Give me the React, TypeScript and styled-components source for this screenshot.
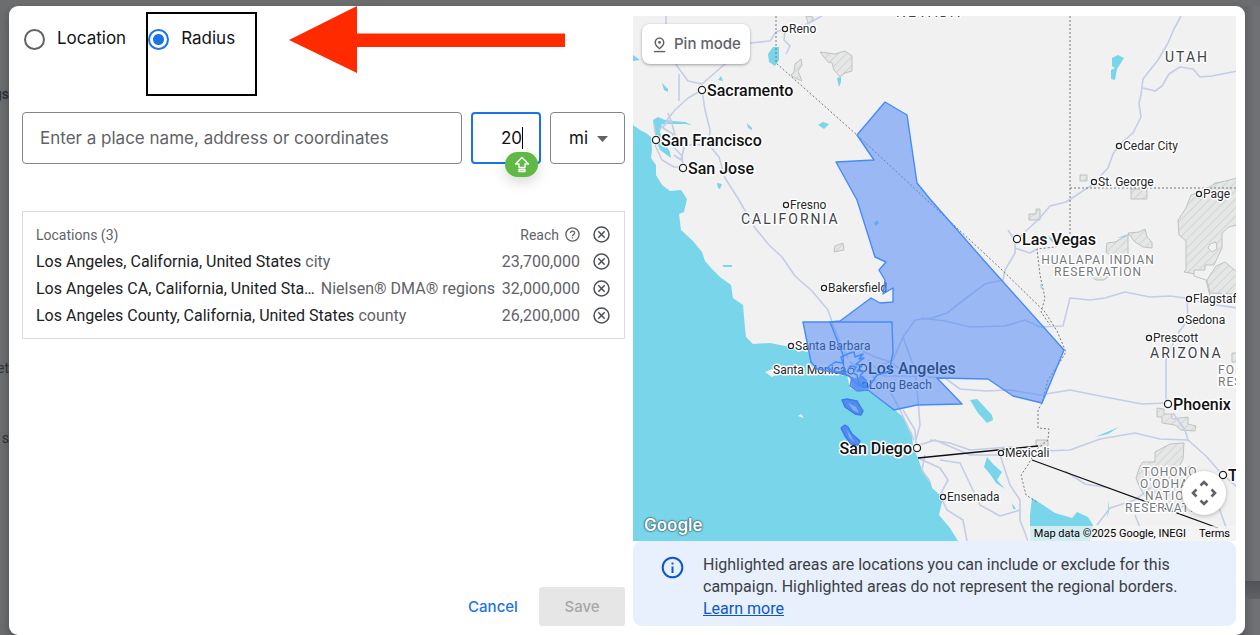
import React, { useState } from 'react';
import styled, { createGlobalStyle, css } from 'styled-components';

const UI_FONT = `'Google Sans', Inter, 'Liberation Sans', sans-serif`;
const TEXT_FONT = `Roboto, 'Liberation Sans', sans-serif`;

const GlobalStyle = createGlobalStyle`
  *, *::before, *::after { box-sizing: border-box; }
  body { margin: 0; background: #6c6d6f; font-family: ${TEXT_FONT}; color: #202124; }
  button, input, select { font: inherit; color: inherit; margin: 0; }
`;

const Page = styled.div`
  display: grid;
  grid-template-columns: 9px minmax(0, 1fr) 15px;
  min-height: 100vh;
  padding-top: 6px;
`;

const Behind = styled.aside`
  display: flex;
  flex-direction: column;
  align-items: flex-end;
  overflow: hidden;
  padding-top: 78px;
  color: #2f333b;
  font-size: 14px;
  line-height: 20px;
`;

const BehindWord = styled.span<{ $gap?: number; $bold?: boolean }>`
  margin-top: ${p => p.$gap ?? 0}px;
  font-weight: ${p => (p.$bold ? 700 : 400)};
`;

const BehindEdge = styled.aside`
  display: flex;
  flex-direction: column;
  justify-content: flex-end;
  background: linear-gradient(90deg, #626366, #707174 10px);
`;

const BehindBand = styled.div`
  height: 18px;
  margin-bottom: 36px;
  background: linear-gradient(#505257, #5f6165);
`;

const Dialog = styled.main`
  display: grid;
  grid-template-columns: minmax(0, 1fr) minmax(0, 1fr);
  gap: 8px;
  padding: 10px 9px 9px 13px;
  background: #fff;
  border-radius: 9px;
  box-shadow: 0 4px 10px rgba(0, 0, 0, 0.3);
`;

const Column = styled.section`
  display: flex;
  flex-direction: column;
  min-width: 0;
`;

/* mode picker */
const ModeRow = styled.div`
  position: relative;
  display: flex;
  gap: 22px;
  height: 46px;
  padding-left: 2px;
`;

const ModeLabel = styled.label`
  position: relative;
  display: flex;
  align-items: center;
  gap: 12px;
  font: 400 17px/24px ${UI_FONT};
  color: #111214;
`;

const Radio = styled.input`
  appearance: none;
  width: 21px;
  height: 21px;
  border: 2px solid #5f6368;
  border-radius: 50%;
  background: #fff;
  &:checked {
    border-color: #1a73e8;
    background: radial-gradient(circle, #1a73e8 5px, #fff 6px);
  }
`;

const ModeText = styled.span`
  padding-bottom: 2px;
`;

const Highlight = styled.span`
  position: absolute;
  left: -2px;
  top: -4px;
  width: 111px;
  height: 84px;
  border: 2px solid #000;
  pointer-events: none;
`;

const Arrow = styled.svg`
  position: absolute;
  left: 267px;
  top: -10px;
  width: 276px;
  height: 68px;
`;

/* search row */
const SearchRow = styled.div`
  display: flex;
  gap: 9px;
  margin-top: 50px;
  font: 400 17px/24px ${UI_FONT};
`;

const fieldBox = css`
  height: 52px;
  border: 1px solid #80868b;
  border-radius: 4px;
  background: #fff;
  outline: none;
`;

const PlaceInput = styled.input`
  ${fieldBox}
  flex: 1;
  min-width: 0;
  padding: 0 17px;
  &::placeholder { color: #5f6368; opacity: 1; }
`;

const DistanceField = styled.div`
  position: relative;
  width: 70px;
`;

const DistanceInput = styled.input`
  ${fieldBox}
  width: 100%;
  border: 2px solid #1a73e8;
  padding: 0 17px;
  text-align: right;
  color: #111214;
`;

const Caret = styled.span`
  position: absolute;
  right: 18px;
  top: 15px;
  width: 1px;
  height: 22px;
  background: #000;
`;

const ExtensionBadge = styled.button`
  position: absolute;
  left: 34px;
  top: 40px;
  display: grid;
  place-items: center;
  width: 33px;
  height: 25px;
  padding: 0;
  border: 0;
  border-radius: 13px;
  background: #5fb944;
  color: #fff;
  box-shadow: 0 5px 14px rgba(0, 0, 0, 0.16);
`;

const UnitField = styled.div`
  position: relative;
  width: 75px;
`;

const UnitSelect = styled.select`
  ${fieldBox}
  appearance: none;
  width: 100%;
  padding: 0 18px;
  color: #111214;
`;

const UnitArrow = styled.svg`
  position: absolute;
  right: 17px;
  top: 24px;
  width: 11px;
  height: 6px;
  fill: #5f6368;
  pointer-events: none;
`;

/* locations table */
const ListCard = styled.div`
  margin-top: 47px;
  padding: 9px 14px 9px 13px;
  border: 1px solid #dadce0;
`;

const Table = styled.table`
  width: 100%;
  border-collapse: collapse;
  font-size: 16px;
  line-height: 20px;
`;

const Row = styled.tr`
  height: 27px;
`;

const HeadCell = styled.th<{ $end?: boolean }>`
  padding: 0;
  font-weight: 400;
  font-size: 14px;
  color: #5f6368;
  text-align: ${p => (p.$end ? 'right' : 'left')};
`;

const HeadLabel = styled.span`
  display: inline-flex;
  align-items: center;
  gap: 6px;
`;

const NameCell = styled.td`
  padding: 0;
  white-space: nowrap;
`;

const Kind = styled.span<{ $apart?: boolean }>`
  margin-left: ${p => (p.$apart ? 6 : 4)}px;
  color: #5f6368;
`;

const ReachCell = styled.td`
  padding: 0;
  text-align: right;
  color: #5f6368;
`;

const ActionCell = styled.td`
  width: 30px;
  padding: 0;
`;

const IconButton = styled.button`
  display: block;
  margin-left: auto;
  padding: 0;
  border: 0;
  background: none;
  color: #4c5056;
  line-height: 0;
`;

/* footer */
const Footer = styled.footer`
  display: flex;
  justify-content: flex-end;
  gap: 3px;
  margin-top: auto;
`;

const FooterButton = styled.button`
  height: 39px;
  min-width: 86px;
  padding: 0 16px;
  border: 0;
  border-radius: 3px;
  background: transparent;
  color: #1a73e8;
  font: 500 15px/20px ${UI_FONT};
  &:disabled { background: #e6e6e6; color: #a5a7a9; }
`;

/* map */
const MapPane = styled.div`
  position: relative;
  display: flex;
  flex: 1 1 400px;
  min-height: 0;
  overflow: hidden;
`;

const MapCanvas = styled.svg`
  flex: 1;
  min-width: 0;
  height: auto;
  background: #f1f1f1;
`;

const PinMode = styled.button`
  position: absolute;
  left: 9px;
  top: 8px;
  display: flex;
  align-items: center;
  gap: 6px;
  height: 40px;
  padding: 0 9px;
  border: 0;
  border-radius: 8px;
  background: #fff;
  color: #5f6368;
  font: 500 15px/20px ${UI_FONT};
  white-space: nowrap;
  box-shadow: 0 1px 3px rgba(0, 0, 0, 0.35);
`;

const CameraButton = styled.button`
  position: absolute;
  right: 10px;
  bottom: 26px;
  display: grid;
  place-items: center;
  width: 44px;
  height: 44px;
  padding: 0;
  border: 0;
  border-radius: 50%;
  background: #fff;
  color: #5f6368;
  box-shadow: 0 1px 4px rgba(0, 0, 0, 0.25);
`;

const MapLogo = styled.span`
  position: absolute;
  left: 11px;
  bottom: 4px;
  color: #fff;
  font: 600 17px/24px ${UI_FONT};
  text-shadow: 0 0 1px #2f5f6c, 0 0 1px #2f5f6c, 0 0 2px #45707a, 0 0 2px #45707a;
`;

const MapCredit = styled.div`
  position: absolute;
  right: 0;
  bottom: 0;
  display: flex;
  gap: 13px;
  height: 15px;
  padding: 0 6px;
  background: rgba(245, 245, 245, 0.72);
  font-size: 11px;
  line-height: 15px;
  color: #000;
`;

const CreditLink = styled.a`
  color: inherit;
  text-decoration: none;
`;

const Notice = styled.div`
  display: flex;
  gap: 19px;
  padding: 13px 28px 6px;
  border-radius: 9px;
  background: #e8f0fe;
  color: #3c4043;
  font-size: 16px;
  line-height: 22px;
`;

const NoticeIcon = styled.svg`
  flex: none;
  width: 23px;
  height: 23px;
  margin-top: 2px;
`;

const NoticeText = styled.p`
  margin: 0;
`;

const LearnMore = styled.a`
  color: #0b57d0;
  display: block;
`;

const stateText = css`font-size: 14px; letter-spacing: 2px; fill: #3f4347;`;
const areaText = css`font-size: 12px; letter-spacing: 1px; fill: #74787d;`;
const majorText = css`font-size: 16px; font-weight: 500; fill: #111;`;
const minorText = css`font-size: 12px; fill: #26282b;`;

type LabelKind = 'state' | 'area' | 'major' | 'minor';

const Label = styled.text<{ $kind: LabelKind }>`
  font-family: ${TEXT_FONT};
  stroke: #fff;
  stroke-width: 3px;
  stroke-linejoin: round;
  paint-order: stroke;
  ${p => ({ state: stateText, area: areaText, major: majorText, minor: minorText })[p.$kind]}
`;

interface City {
  x: number;
  y: number;
  name: string;
  kind?: 'major' | 'minor';
  before?: boolean;
}

const Place = ({ x, y, name, kind = 'minor', before }: City) => {
  const r = kind === 'major' ? 4 : 3;
  return (
    <g>
      <circle cx={x} cy={y} r={r + 1} fill="#fff" />
      <circle cx={x} cy={y} r={r - 0.4} fill="#fff" stroke="#222" strokeWidth="1.3" />
      <Label $kind={kind} x={before ? x - 5 : x + r + 1} y={kind === 'major' ? y + 6 : y + 4} textAnchor={before ? 'end' : 'start'}>
        {name}
      </Label>
    </g>
  );
};

const CITIES: City[] = [
  { x: 785, y: 29, name: 'Reno' },
  { x: 702, y: 90, name: 'Sacramento', kind: 'major' },
  { x: 656, y: 140, name: 'San Francisco', kind: 'major' },
  { x: 683, y: 168, name: 'San Jose', kind: 'major' },
  { x: 786, y: 205, name: 'Fresno' },
  { x: 824, y: 288, name: 'Bakersfield' },
  { x: 791, y: 346, name: 'Santa Barbara' },
  { x: 863, y: 368, name: 'Los Angeles', kind: 'major' },
  { x: 865, y: 385, name: 'Long Beach' },
  { x: 917, y: 448, name: 'San Diego', kind: 'major', before: true },
  { x: 1001, y: 453, name: 'Mexicali' },
  { x: 943, y: 497, name: 'Ensenada' },
  { x: 1017, y: 239, name: 'Las Vegas', kind: 'major' },
  { x: 1119, y: 146, name: 'Cedar City' },
  { x: 1094, y: 182, name: 'St. George' },
  { x: 1199, y: 194, name: 'Page' },
  { x: 1189, y: 299, name: 'Flagstaff' },
  { x: 1181, y: 320, name: 'Sedona' },
  { x: 1149, y: 338, name: 'Prescott' },
  { x: 1168, y: 404, name: 'Phoenix', kind: 'major' },
  { x: 1223, y: 475, name: 'Tucson', kind: 'major' },
];

const REGION =
  'M885 102L907 115L917 183L930 199L988 265L1064 350L1042 403L1013 396L988 379L937 378L962 404L917 405L894 410L868 390L857 391L850 386L852 378L844 373L843 355L830 322L840 321L871 298L880 303L893 302L893 288L883 294L885 280L879 270L886 262L875 257L857 200L836 162L874 160L857 135Z';
const COUNTY = 'M803 322L892 322L893 353L889 372L877 375L868 388L858 385L849 376L838 373L817 369L811 362Z';
const CITY =
  'M843 363L841 357L850 353L854 352L855 357L863 354L859 359L864 358L856 364L862 366L857 371L864 371L860 376L866 380L866 386L859 384L857 375L853 373L856 367L850 366L847 372L836 372L827 368L835 362Z';
const ISLAND_A = 'M842 400L847 399L857 401L863 411L861 415L855 414L845 407Z';
const ISLAND_B = 'M841 428L845 425L848 427L852 434L860 441L858 445L851 444L845 436Z';

const MapDrawing = () => (
  <MapCanvas viewBox="633 16 604 525" preserveAspectRatio="xMinYMid slice" role="img" aria-label="Map of California and surrounding states">
    <defs>
      <pattern id="hatch" width="6" height="6" patternUnits="userSpaceOnUse" patternTransform="rotate(45)">
        <rect width="6" height="6" fill="#e5e6e6" />
        <path d="M0 0V6" stroke="#d3d5d5" strokeWidth="2" />
      </pattern>
    </defs>
    <rect x="633" y="16" width="604" height="525" fill="#f1f1f1" />

    {/* water */}
    <g fill="#79d5e9">
      <path d="M633 125L640 130L646 133L651 137L652 150L651 158L656 165L656 175L662 185L670 191L681 190L687 199L684 212L679 214L681 230L693 241L702 252L705 261L712 269L720 277L731 285L733 298L743 305L745 328L746 337L753 344L770 343L790 347L807 348L812 365L827 371L847 375L850 388L857 391L867 390L893 408L903 417L912 433L913 447L918 458L922 470L930 480L932 488L940 495L942 502L939 515L950 528L958 541H633Z" />
      <path d="M1032 498L1040 503L1055 513L1072 518L1077 512L1088 517L1093 525L1090 541H1030V515Z" />
      <path d="M653 120L658 117L665 120L673 121L685 122L692 125L685 124L670 124L662 124L660 132L664 142L670 152L671 158L660 150L656 140Z" />
      <path d="M773 47L779 47L779 60L775 66L769 62L768 54Z" />
      <path d="M1112 58L1118 55L1124 58L1117 69L1115 80L1111 79L1111 70L1115 68L1112 66Z" />
      <path d="M662 83L668 89L668 92L664 90ZM718 80L721 76L723 81ZM747 123L752 128L752 130L748 128ZM818 125L823 122L829 124L824 129ZM837 78L841 77L841 82L839 87ZM633 55L640 60L633 61ZM717 183L722 184L720 189L718 188ZM722 265L732 265L732 267L724 267ZM1048 236L1051 241L1059 247L1054 240Z" />
      <path d="M970 400L977 399L992 415L993 420L987 423L978 413Z" />
      <path d="M987 457L993 464L1002 472L997 480L1005 489L996 483L990 474L984 467ZM1012 503L1016 509L1013 509ZM1109 500L1107 518L1109 511ZM1095 437L1119 427L1108 434ZM1213 183L1225 181L1217 184ZM1117 238L1132 233L1126 237ZM1040 283L1042 287L1041 289ZM874 223L877 220L879 223L876 226Z" />
    </g>
    <path d="M765 372L772 369L776 375L772 377ZM798 416L801 414L804 418Z" fill="#f1f1f1" />

    {/* reservations and closed areas */}
    <g fill="url(#hatch)" stroke="#bfc2c2" strokeWidth="1">
      <path d="M820 52L835 54L845 51L852 56L852 71L845 73L840 77L834 70L832 63L828 62Z" />
      <path d="M791 75L794 72L795 64L801 59L802 65L798 71L802 81L795 78ZM806 16L813 17L813 21L808 23ZM835 246L843 243L844 250L834 252Z" />
      <path d="M1080 175H1087V181H1080ZM1131 189H1147V199H1131ZM1029 214H1036V209H1040V220H1029Z" />
      <path d="M1237 178L1214 184L1205 190L1191 195L1186 208L1178 220L1179 235L1186 241L1186 270L1184 272L1207 276L1210 293L1237 292V178Z" />
      <path d="M1237 225L1229 227L1222 233V248L1214 265H1205V270H1194V276L1206 280L1210 296H1237Z" fill="#f1f1f1" />
      <path d="M1210 244L1216 242L1217 249L1212 252L1208 248Z" fill="#f1f1f1" />
      <path d="M1207 280L1210 293L1237 294V272L1225 262L1216 266Z" />
      <path d="M1106 252L1107 243L1115 242L1128 235V257H1112ZM1128 233L1139 232L1145 229L1147 237L1152 242V248L1143 247L1135 242Z" />
      <path d="M1157 408L1164 409V414H1172V419L1188 417V424L1196 426L1195 431L1181 430L1175 425L1162 423V417H1157Z" />
      <path d="M1143 462H1155V452L1170 444L1184 443L1183 459L1178 469L1190 466L1200 480L1190 505L1170 510L1150 505L1140 488L1136 478L1140 466Z" />
      <path d="M1036 440H1048V446H1036ZM1236 353H1232V362H1237M1090 276L1096 280H1104L1109 276" />
    </g>

    {/* roads */}
    <g fill="none" stroke="#c3cde6" strokeWidth="1.6" strokeLinejoin="round">
      <path d="M666 16V45L677 66L688 81L702 84M679 74V101M702 84L725 64L736 49L750 43L770 41L776 32L790 27L805 25L822 16" />
      <path d="M785 30L784 40L790 46L786 54" />
      <path d="M702 90L688 98L675 110L667 120L663 128L673 134L672 145L682 156L683 166M668 113L671 121L664 125L659 130M702 90L705 110L710 130L709 145L719 157L725 178L739 200L755 228L770 246L782 257L795 276L812 291L828 310L833 325L841 345L848 358" />
      <path d="M655 145L662 160L674 167L683 167M671 120L675 135L684 148L681 160L674 155M688 145L709 145M656 138L654 124" />
      <path d="M1181 16L1174 29L1168 43L1158 60L1143 79L1141 95L1139 103L1141 117L1133 133L1120 144L1113 154L1108 168L1092 185L1066 202L1050 206L1038 220L1027 230L1017 239M1143 88L1155 91L1162 86L1169 74L1180 67L1193 69L1200 77L1212 76L1237 71" />
      <path d="M1008 230L1015 241L1015 253L1005 270L1003 280L985 284L965 299L947 313L932 318L915 320L903 337L893 360L880 366M1015 248L1030 253L1037 249" />
      <path d="M921 318L945 321L970 327L1005 326L1025 320L1040 327L1063 326L1066 314L1070 298L1090 300L1105 298L1125 292L1150 297L1170 296L1185 298L1210 304L1237 308M1187 300L1188 320L1178 333" />
      <path d="M864 370L885 376L910 376L945 378L960 389L985 391L1010 390L1040 395L1070 390L1105 397L1142 404L1168 403M1166 403L1166 360L1176 337M1173 413L1185 430L1188 440L1206 456L1220 472L1237 487M1223 475L1218 505L1227 530" />
      <path d="M930 440L950 443L970 450L1010 447L1043 451L1070 450L1100 439L1135 433L1160 439L1188 440M903 410L915 430L916 446L935 440L970 455L1000 455L1010 485L1020 500L1020 520L1028 541" />
      <path d="M903 337L915 370L918 400L920 425L916 440M918 458L940 468L948 480L940 495L947 510L963 520L967 541M925 455L922 470L930 482M940 460L960 463L980 505L1000 516L1020 510" />
      <path d="M870 370L876 382L890 391L900 410L914 440M860 350L875 357L888 361L905 372M868 360L882 375M850 362L864 372" />
      <path d="M1065 471L1085 484L1110 488M1097 525L1110 508L1135 500L1150 488M1135 515L1143 535" />
    </g>

    {/* borders */}
    <g fill="none" stroke="#77797c" strokeWidth="1" strokeDasharray="2 2">
      <path d="M776 16V63L857 135L1000 268L1045 312L1057 331L1066 352L1060 362L1048 380L1042 403L1038 410L1038 428L1049 429L1048 440L1036 450L1028 465L1021 475L1026 495L1037 502" />
      <path d="M1070 16V236L1055 247L1037 249L1040 275L1045 298L1041 312L1050 325M1070 188H1237" />
    </g>
    <path d="M918 458L1038 446M1032 460L1218 528" stroke="#111" strokeWidth="1.3" fill="none" />

    {/* labels */}
    <Label $kind="state" x="896" y="17">NEVADA</Label>
    <Label $kind="state" x="741" y="224">CALIFORNIA</Label>
    <Label $kind="state" x="1165" y="62">UTAH</Label>
    <Label $kind="state" x="1150" y="358">ARIZONA</Label>
    <Label $kind="area" x="1098" y="264" textAnchor="middle">HUALAPAI INDIAN</Label>
    <Label $kind="area" x="1098" y="276" textAnchor="middle">RESERVATION</Label>
    <Label $kind="area" x="1218" y="374">FORT</Label>
    <Label $kind="area" x="1218" y="386">RES</Label>
    <Label $kind="area" x="1170" y="476" textAnchor="middle">TOHONO</Label>
    <Label $kind="area" x="1140" y="488">O'ODHAM</Label>
    <Label $kind="area" x="1145" y="500">NATION</Label>
    <Label $kind="area" x="1125" y="512">RESERVATION</Label>
    <Label $kind="minor" x="773" y="374">Santa Monica</Label>
    <circle cx="851" cy="371" r="3" fill="none" stroke="#333" />
    {CITIES.map(c => <Place key={c.name} {...c} />)}

    {/* highlighted locations */}
    <g fill="#4a86f7" opacity="0.52">
      <path d={REGION} />
      <path d={COUNTY} />
    </g>
    <path d="M850 377L856 378L864 376L868 388L860 391L852 388Z" fill="#3b7de8" opacity="0.6" />
    <g fill="none" stroke="#468bf8" strokeWidth="1.4" strokeLinejoin="round">
      <path d={REGION} />
      <path d={COUNTY} />
      <path d={CITY} />
    </g>
    <g fill="#4f8bf0" stroke="#3a7bea" strokeWidth="1.4" strokeLinejoin="round">
      <path d={ISLAND_A} />
      <path d={ISLAND_B} />
    </g>
    <path d="M848 403L856 407L859 413L853 410ZM847 430L851 436L854 442L849 437Z" fill="#86aef5" />
  </MapCanvas>
);

const RemoveIcon = () => (
  <svg width="17" height="17" viewBox="0 0 17 17" fill="none" stroke="currentColor" strokeWidth="1.5">
    <circle cx="8.5" cy="8.5" r="7.5" />
    <path d="M5.3 5.3L11.7 11.7M11.7 5.3L5.3 11.7" />
  </svg>
);

const HelpIcon = () => (
  <svg width="15" height="15" viewBox="0 0 15 15" fill="none" stroke="currentColor" strokeWidth="1.3">
    <circle cx="7.5" cy="7.5" r="6.6" />
    <path d="M5.5 6C5.5 3.4 9.6 3.4 9.6 5.9C9.6 7.4 7.5 7.5 7.5 9.2M7.5 10.2V11.6" />
  </svg>
);

const ROWS = [
  { name: 'Los Angeles, California, United States', kind: 'city', reach: '23,700,000' },
  { name: 'Los Angeles CA, California, United Sta…', kind: 'Nielsen® DMA® regions', reach: '32,000,000', apart: true },
  { name: 'Los Angeles County, California, United States', kind: 'county', reach: '26,200,000' },
];

export default function App() {
  const [mode, setMode] = useState('radius');
  const [distance, setDistance] = useState('20');

  return (
    <>
      <GlobalStyle />
      <Page>
        <Behind aria-hidden="true">
          <BehindWord $bold>gs</BehindWord>
          <BehindWord $gap={254}>et</BehindWord>
          <BehindWord $gap={50}>s</BehindWord>
        </Behind>

        <Dialog>
          <Column>
            <ModeRow role="radiogroup" aria-label="Search mode">
              <ModeLabel>
                <Radio type="radio" name="mode" checked={mode === 'location'} onChange={() => setMode('location')} />
                <ModeText>Location</ModeText>
              </ModeLabel>
              <ModeLabel>
                <Radio type="radio" name="mode" checked={mode === 'radius'} onChange={() => setMode('radius')} />
                <ModeText>Radius</ModeText>
                <Highlight />
              </ModeLabel>
              <Arrow viewBox="0 0 276 68" aria-hidden="true">
                <path d="M0 34L68 0V27.500H276V41H68V67Z" fill="#ff2a00" />
              </Arrow>
            </ModeRow>

            <SearchRow>
              <PlaceInput type="text" aria-label="Place" placeholder="Enter a place name, address or coordinates" />
              <DistanceField>
                <DistanceInput type="text" aria-label="Distance" value={distance} onChange={e => setDistance(e.target.value)} />
                <Caret />
                <ExtensionBadge type="button" aria-label="Fill field">
                  <svg width="16" height="17" viewBox="0 0 16 17" fill="none" stroke="currentColor" strokeWidth="1.4" strokeLinejoin="round">
                    <path d="M8 1.500L14.500 8H11V11.500H5V8H1.500ZM5 13.500H11V15.500H5Z" />
                  </svg>
                </ExtensionBadge>
              </DistanceField>
              <UnitField>
                <UnitSelect aria-label="Unit" defaultValue="mi">
                  <option value="mi">mi</option>
                  <option value="km">km</option>
                </UnitSelect>
                <UnitArrow viewBox="0 0 11 6"><path d="M0 0H11L5.500 6Z" /></UnitArrow>
              </UnitField>
            </SearchRow>

            <ListCard>
              <Table>
                <thead>
                  <Row>
                    <HeadCell scope="col">Locations (3)</HeadCell>
                    <HeadCell scope="col" $end><HeadLabel>Reach <HelpIcon /></HeadLabel></HeadCell>
                    <ActionCell><IconButton type="button" aria-label="Remove all"><RemoveIcon /></IconButton></ActionCell>
                  </Row>
                </thead>
                <tbody>
                  {ROWS.map(r => (
                    <Row key={r.name}>
                      <NameCell>{r.name}<Kind $apart={r.apart}>{r.kind}</Kind></NameCell>
                      <ReachCell>{r.reach}</ReachCell>
                      <ActionCell><IconButton type="button" aria-label={`Remove ${r.name}`}><RemoveIcon /></IconButton></ActionCell>
                    </Row>
                  ))}
                </tbody>
              </Table>
            </ListCard>

            <Footer>
              <FooterButton type="button">Cancel</FooterButton>
              <FooterButton type="button" disabled>Save</FooterButton>
            </Footer>
          </Column>

          <Column>
            <MapPane>
              <MapDrawing />
              <PinMode type="button">
                <svg width="17" height="17" viewBox="0 0 24 24" fill="currentColor">
                  <path d="M12 4c1.930 0 5 1.400 5 5.150 0 2.160-1.720 4.670-5 7.320-3.280-2.650-5-5.170-5-7.320C7 5.400 10.070 4 12 4m0-2C8.730 2 5 4.460 5 9.150c0 3.120 2.330 6.410 7 9.850 4.670-3.440 7-6.730 7-9.850C19 4.460 15.270 2 12 2z" />
                  <circle cx="12" cy="9" r="2" />
                  <path d="M4 21H20V23H4z" />
                </svg>
                Pin mode
              </PinMode>
              <MapLogo>Google</MapLogo>
              <MapCredit>
                <span>Map data ©2025 Google, INEGI</span>
                <CreditLink href="#terms">Terms</CreditLink>
              </MapCredit>
              <CameraButton type="button" aria-label="Map camera controls">
                <svg width="26" height="26" viewBox="0 0 26 26" fill="none" stroke="currentColor" strokeWidth="2.6">
                  <path d="M9.500 5.500L13 2L16.500 5.500M9.500 20.500L13 24L16.500 20.500M5.500 9.500L2 13L5.500 16.500M20.500 9.500L24 13L20.500 16.500" />
                </svg>
              </CameraButton>
            </MapPane>
            <Notice>
              <NoticeIcon viewBox="0 0 23 23" fill="none" stroke="#0b57d0" strokeWidth="2">
                <circle cx="11.500" cy="11.500" r="9.800" />
                <path d="M11.500 10.500V17M11.500 6.500V8.500" />
              </NoticeIcon>
              <NoticeText>
                Highlighted areas are locations you can include or exclude for this campaign. Highlighted areas do not represent the regional borders.
                <LearnMore href="#learn">Learn more</LearnMore>
              </NoticeText>
            </Notice>
          </Column>
        </Dialog>

        <BehindEdge aria-hidden="true"><BehindBand /></BehindEdge>
      </Page>
    </>
  );
}
